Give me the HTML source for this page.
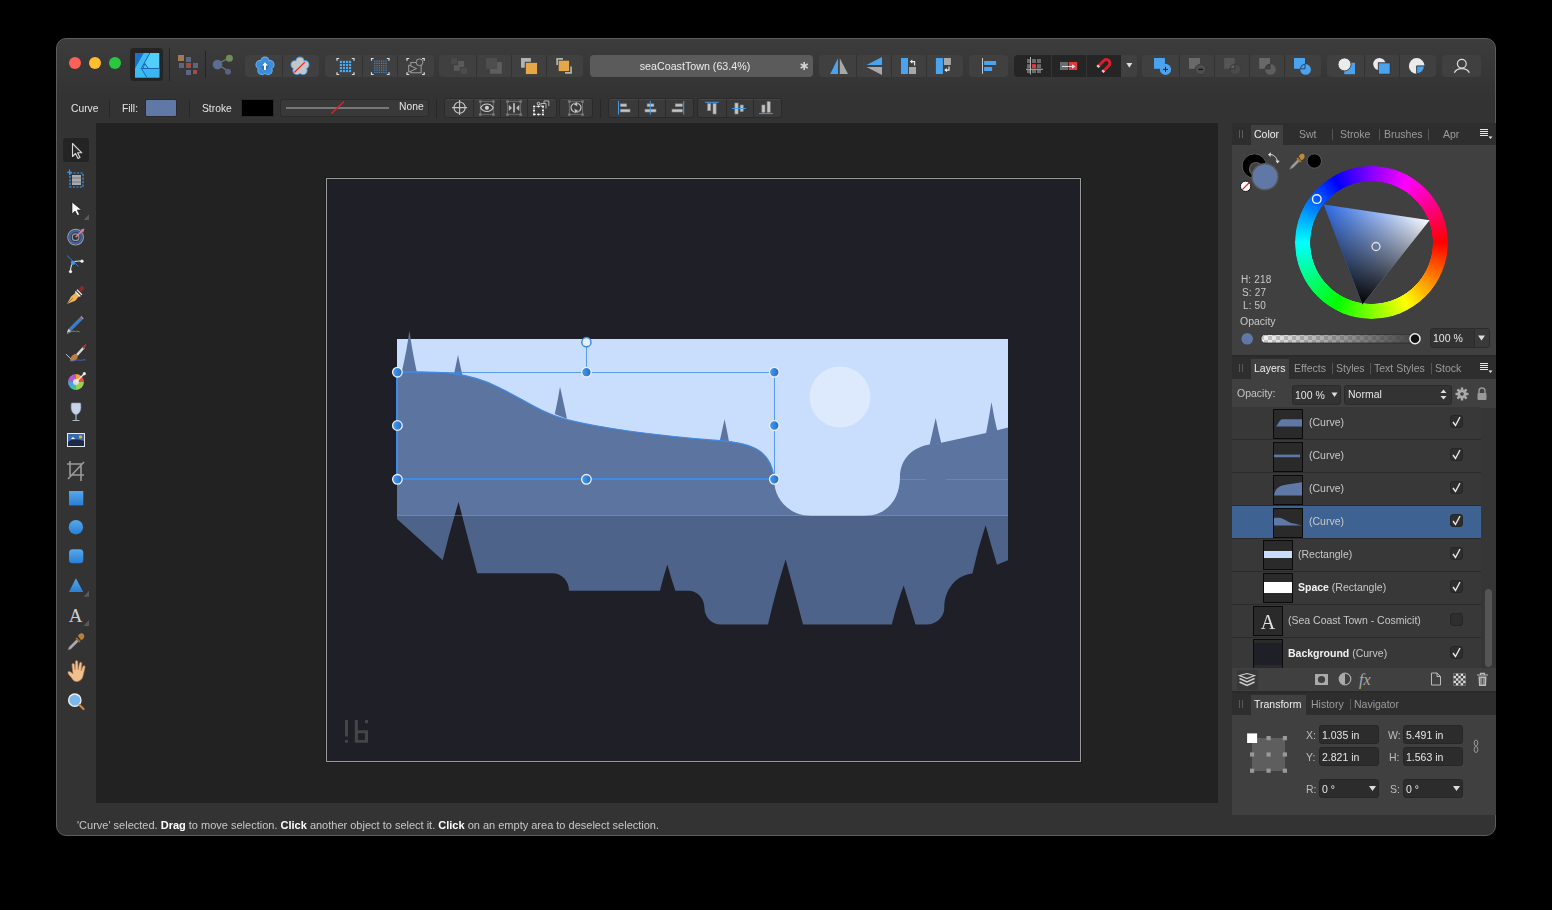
<!DOCTYPE html>
<html><head><meta charset="utf-8">
<style>
*{margin:0;padding:0;box-sizing:border-box}
html,body{width:1552px;height:910px;overflow:hidden;background:#000;font-family:"Liberation Sans",sans-serif;-webkit-font-smoothing:antialiased}
.abs{position:absolute}
#win{position:absolute;left:56px;top:38px;width:1440px;height:798px;border-radius:10px;background:linear-gradient(#3c3c3c 0px,#393939 20px,#353535 45px,#333 55px,#333 100%);border:1px solid #5c5c5c;overflow:hidden}
#canvas{position:absolute;left:96px;top:123px;width:1122px;height:680px;background:#222222}
#doc{position:absolute;left:326px;top:178px;width:755px;height:584px;border:1px solid #9a9a9a;background:#1e1f27;box-shadow:0 0 0 1px #1a1a1a}
.t{position:absolute;white-space:nowrap;color:#e0e0e0;font-size:11px;line-height:1}

.grp{position:absolute;top:55px;height:22px;background:#404040;border-radius:4px}
.dv{position:absolute;top:0;bottom:0;width:1px;background:#333}
.ic{position:absolute;overflow:visible}
.sep{position:absolute;width:1px;background:#252525}

.g2{position:absolute;top:98px;height:20px;background:#3a3a3a;border:1px solid #2a2a2a;border-radius:3px;box-shadow:inset 0 1px 0 #464646}
.d2{position:absolute;top:0;bottom:0;width:1px;background:#2c2c2c}

.tabstrip{position:absolute;left:1232px;width:264px;background:#2e2e2e}
.tab{position:absolute;font-size:10.5px;color:#9c9c9c;white-space:nowrap;line-height:1}
.tabsel{position:absolute;background:#404040}
.tsep{position:absolute;width:1px;height:11px;background:#555}
.row{position:absolute;left:1232px;width:249px;height:33px;border-bottom:1px solid #2a2a2a;background:#383838}
.thumb{position:absolute;width:30px;height:30px;background:#2a2a2a;border:1px solid #0a0a0a}
.lt{position:absolute;font-size:10.5px;color:#c8c8c8;white-space:nowrap;line-height:1}
.lt b{color:#f2f2f2}
.cb{position:absolute;left:1450px;width:13px;height:13px;border-radius:3px;background:#2e2e2e;border:1px solid #262626}
.fld{position:absolute;background:#2c2c2c;border-radius:3px;border:1px solid #262626}
.ft{position:absolute;font-size:10.5px;color:#e6e6e6;white-space:nowrap;line-height:1}
.lbl{position:absolute;font-size:10.5px;color:#bdbdbd;white-space:nowrap;line-height:1}
.t,.tab,.lt,.ft,.lbl{will-change:transform}
</style></head>
<body>
<div id="win"></div>
<div id="canvas"></div>
<div id="doc"></div>
<!-- ARTWORK -->
<svg class="abs" style="left:0;top:0" width="1552" height="910" viewBox="0 0 1552 910">
  <rect x="397" y="339" width="611" height="177" fill="#c9ddfd"/>
  <circle cx="840" cy="397" r="30.5" fill="#dde9fd"/>
  <path fill="#5c74a0" d="M397,372 C440,371 470,372 500,388 C525,400 540,412 565,419 C600,428 660,436 720,440.6 C745,442.5 772,447 774,479 C774,500 790,516 812,516 L397,516 Z"/>
  <path fill="#5c74a0" d="M401.5,373 Q407,350 409.4,330.6 Q412,350 417,373 Z M453.8,375 Q456,365 458,355 Q460,365 462.6,376 Z M554.8,414 Q558,400 560,386.8 Q563,400 567,419 Z M719.3,443 Q722,431 724.6,419.3 Q727,431 729.3,443 Z"/>
  <path fill="#5c74a0" d="M864,516 C886,516 900,500 900,477 C900,458 914,447 929.6,444.5 L941.2,442.7 L986,432.9 L997.3,430.2 L1008,427.4 L1008,516 Z"/>
  <path fill="#5c74a0" d="M929.6,445 Q933,430 935.7,418 Q938,430 941.2,443 Z M986,433.5 Q989,418 991.5,402 Q994,418 997.3,431 Z"/>
  <rect x="397" y="516" width="611" height="109" fill="#4d6389"/>
  <path fill="#1e1f27" d="M397,519 L442.7,560.3 Q450,530 458.6,502 Q467,535 477.2,573.3 L552,573.3 C562,573.3 569,581 569,590.7 L660,590.7 Q663,578 667.3,564.5 Q671,578 675.4,590.7 L688.3,590.7 C697,590.7 704.4,598 704.4,607.7 C704.4,617 712,624.5 720.6,624.5 L768,624.5 Q776,590 785.6,559.6 Q794,590 803,624.5 L891.8,624.5 Q897,603 903.7,585.4 Q909,603 915.5,624.5 L926.8,624.5 C936,624.5 944.3,617 944.3,608 C944.3,590 956,575 972.4,573.5 Q978,548 985.6,525.2 Q991,545 997,564.7 L1008,560.3 L1008,660 L397,660 Z"/>
  <line x1="397" y1="515.5" x2="1008" y2="515.5" stroke="#8ea0c4" stroke-opacity="0.42" stroke-width="1"/>
  <line x1="900" y1="479.5" x2="926" y2="479.5" stroke="#8ea0c4" stroke-opacity="0.38" stroke-width="1"/>
  <line x1="946" y1="479.5" x2="1008" y2="479.5" stroke="#8ea0c4" stroke-opacity="0.38" stroke-width="1"/>
  <!-- logo -->
  <g fill="#454545">
    <rect x="345" y="720" width="3" height="16.5"/><rect x="345" y="740" width="3" height="2.7"/>
    <path d="M354.8,720 h3.1 v10.2 h10.1 v12.5 h-13.2 Z M358,733.3 v6.6 h6.9 v-6.6 Z" fill-rule="evenodd"/>
    <rect x="365" y="720" width="3" height="3.2"/>
  </g>
  <!-- selection -->
  <g fill="none" stroke="#3f8be6">
    <path stroke-width="1.1" d="M397,372 C440,371 470,372 500,388 C525,400 540,412 565,419 C600,428 660,436 720,440.6 C745,442.5 772,447 774,479"/>
    <line x1="397" y1="372.5" x2="774" y2="372.5" stroke-width="1" stroke-opacity="0.8"/>
    <line x1="774.5" y1="372" x2="774.5" y2="479" stroke-width="1" stroke-opacity="0.8"/>
    <line x1="586.5" y1="342" x2="586.5" y2="372" stroke-width="1" stroke-opacity="0.8"/>
    <line x1="397" y1="479" x2="774" y2="479" stroke-width="2"/>
    <line x1="397" y1="372" x2="397" y2="479" stroke-width="2"/>
  </g>
  <defs><linearGradient id="hg" x1="0" x2="1" y1="0" y2="0"><stop offset="0" stop-color="#4a9cf0"/><stop offset="1" stop-color="#1f6cc8"/></linearGradient></defs>
  <g fill="url(#hg)" stroke="#f0f0f0" stroke-width="1.3">
    <circle cx="397.4" cy="372.2" r="4.8"/><circle cx="586.4" cy="372.2" r="4.8"/><circle cx="774.3" cy="372.2" r="4.8"/>
    <circle cx="397.4" cy="425.5" r="4.8"/><circle cx="774.3" cy="425.5" r="4.8"/>
    <circle cx="397.4" cy="479.3" r="4.8"/><circle cx="586.4" cy="479.3" r="4.8"/><circle cx="774.3" cy="479.3" r="4.8"/>
  </g>
  <circle cx="586.4" cy="342.2" r="4.6" fill="#e8f0fb" stroke="#3f8be6" stroke-width="1.5"/>
</svg>
<!-- TOOLBAR -->
<div class="abs" style="left:75px;top:63px;width:12px;height:12px;margin:-6px 0 0 -6px;border-radius:50%;background:#fe5f57"></div>
<div class="abs" style="left:95px;top:63px;width:12px;height:12px;margin:-6px 0 0 -6px;border-radius:50%;background:#febc2e"></div>
<div class="abs" style="left:115px;top:63px;width:12px;height:12px;margin:-6px 0 0 -6px;border-radius:50%;background:#28c840"></div>
<div class="abs" style="left:130px;top:48px;width:33px;height:33px;background:#242424;border-radius:4px"></div>
<svg class="ic" style="left:134.9px;top:52.7px" width="24.3" height="24.4" viewBox="0 0 24.3 24.4">
 <rect x="0" y="0" width="24.3" height="24.4" fill="#52cefa"/>
 <path d="M0,0 H9 L0,16 Z" fill="#1b70cc"/>
 <path d="M9,0 H14.8 L6.3,15.5 L11.8,24.4 H0 V16 Z" fill="#3dbcf4"/>
 <path d="M6.3,15.5 H24.3 V24.4 H11.8 Z" fill="#3ab6f2"/>
 <path d="M9.8,10.4 L8,15.5 H13.3 Z" fill="#48c4f6"/>
 <path d="M14.8,0 L6.3,15.5 L11.8,24.4 M6.3,15.5 H24.3 M9.8,10.4 L8,15.5 M9.8,10.4 L13.3,15.5" stroke="#1d62b4" stroke-width="1" fill="none"/>
</svg>
<div class="sep" style="left:169px;top:48px;height:33px"></div>
<svg class="ic" style="left:178px;top:55px" width="22" height="20" viewBox="0 0 22 20">
 <rect x="0" y="0" width="6" height="6" fill="#a27a55"/><rect x="8" y="2" width="5" height="5" fill="#5c6584"/>
 <rect x="1" y="8" width="5" height="5" fill="#5c6584"/><rect x="8" y="8" width="5" height="5" fill="#a04d48"/><rect x="15" y="8" width="5" height="5" fill="#5c6584"/>
 <rect x="8" y="15" width="5" height="5" fill="#5c6584"/><rect x="15" y="15" width="4" height="4" fill="#a04d48"/>
</svg>
<div class="sep" style="left:205px;top:51px;height:27px"></div>
<svg class="ic" style="left:210px;top:54px" width="24" height="22" viewBox="0 0 24 22">
 <path d="M7,10 L19,4 M7,10 L18,17" stroke="#777" stroke-width="1.3"/>
 <circle cx="7.5" cy="10.6" r="4.8" fill="#5a6e92"/><circle cx="19.4" cy="4.3" r="3.5" fill="#6e8d57"/><circle cx="18" cy="17.8" r="3" fill="#5a6088"/>
</svg>
<div class="grp" style="left:245px;width:74px"><div class="dv" style="left:37px"></div></div>
<svg class="ic" style="left:254px;top:56px" width="22" height="20" viewBox="0 0 22 20"><circle cx="11.00" cy="5.10" r="4.6" fill="#6db4f2"/><circle cx="15.95" cy="8.69" r="4.6" fill="#6db4f2"/><circle cx="14.06" cy="14.51" r="4.6" fill="#6db4f2"/><circle cx="7.94" cy="14.51" r="4.6" fill="#6db4f2"/><circle cx="6.05" cy="8.69" r="4.6" fill="#6db4f2"/><circle cx="11" cy="10.3" r="6.6" fill="#6db4f2"/><circle cx="11.00" cy="5.10" r="3.7" fill="#3d8ddb"/><circle cx="15.95" cy="8.69" r="3.7" fill="#3d8ddb"/><circle cx="14.06" cy="14.51" r="3.7" fill="#3d8ddb"/><circle cx="7.94" cy="14.51" r="3.7" fill="#3d8ddb"/><circle cx="6.05" cy="8.69" r="3.7" fill="#3d8ddb"/><circle cx="11" cy="10.3" r="5.8" fill="#3d8ddb"/><circle cx="11" cy="10.3" r="3.6" fill="#2f72c0"/><path d="M11,6.2 L8,9.6 L10,9.6 L10,14 L12,14 L12,9.6 L14,9.6 Z" fill="#fff"/></svg>
<svg class="ic" style="left:289px;top:56px" width="22" height="20" viewBox="0 0 22 20"><circle cx="11.00" cy="5.10" r="4.6" fill="#3d8fe0"/><circle cx="15.95" cy="8.69" r="4.6" fill="#3d8fe0"/><circle cx="14.06" cy="14.51" r="4.6" fill="#3d8fe0"/><circle cx="7.94" cy="14.51" r="4.6" fill="#3d8fe0"/><circle cx="6.05" cy="8.69" r="4.6" fill="#3d8fe0"/><circle cx="11" cy="10.3" r="6.6" fill="#3d8fe0"/><circle cx="11.00" cy="5.10" r="3.7" fill="#c6c6c6"/><circle cx="15.95" cy="8.69" r="3.7" fill="#c6c6c6"/><circle cx="14.06" cy="14.51" r="3.7" fill="#c6c6c6"/><circle cx="7.94" cy="14.51" r="3.7" fill="#c6c6c6"/><circle cx="6.05" cy="8.69" r="3.7" fill="#c6c6c6"/><circle cx="11" cy="10.3" r="5.8" fill="#c6c6c6"/><path d="M5.3,16.5 L15.9,6.1" stroke="#e8282a" stroke-width="1.3"/></svg>
<div class="grp" style="left:325px;width:109px"><div class="dv" style="left:37px"></div><div class="dv" style="left:72px"></div></div>
<div class="grp" style="left:439px;width:144px"><div class="dv" style="left:37px"></div><div class="dv" style="left:72px"></div><div class="dv" style="left:107px"></div></div>
<div class="abs" style="left:590px;top:55px;width:223px;height:22px;background:#5b5b5b;border-radius:4px"></div>
<div class="t" style="left:590px;top:60.5px;width:210px;text-align:center;font-size:10.7px;color:#ececec">seaCoastTown (63.4%)</div>
<svg class="ic" style="left:798px;top:60px" width="12" height="12" viewBox="0 0 12 12"><path d="M6.2,2 V10 M2.7,4 L9.7,8 M2.7,8 L9.7,4" stroke="#d4d4d4" stroke-width="1.6"/></svg>
<svg class="ic" style="left:0;top:0" width="600" height="90" viewBox="0 0 600 90"><path d="M337,60.7 V58.5 H339.2 M351.8,58.5 H354 V60.7 M354,72.3 V74.5 H351.8 M339.2,74.5 H337 V72.3" stroke="#e0e0e0" stroke-width="1.2" fill="none"/><rect x="339.80" y="60.80" width="2.2" height="2.2" fill="#4aaaf4"/><rect x="339.80" y="63.85" width="2.2" height="2.2" fill="#4aaaf4"/><rect x="339.80" y="66.90" width="2.2" height="2.2" fill="#4aaaf4"/><rect x="339.80" y="69.95" width="2.2" height="2.2" fill="#4aaaf4"/><rect x="342.85" y="60.80" width="2.2" height="2.2" fill="#4aaaf4"/><rect x="342.85" y="63.85" width="2.2" height="2.2" fill="#4aaaf4"/><rect x="342.85" y="66.90" width="2.2" height="2.2" fill="#4aaaf4"/><rect x="342.85" y="69.95" width="2.2" height="2.2" fill="#4aaaf4"/><rect x="345.90" y="60.80" width="2.2" height="2.2" fill="#4aaaf4"/><rect x="345.90" y="63.85" width="2.2" height="2.2" fill="#4aaaf4"/><rect x="345.90" y="66.90" width="2.2" height="2.2" fill="#4aaaf4"/><rect x="345.90" y="69.95" width="2.2" height="2.2" fill="#4aaaf4"/><rect x="348.95" y="60.80" width="2.2" height="2.2" fill="#4aaaf4"/><rect x="348.95" y="63.85" width="2.2" height="2.2" fill="#4aaaf4"/><rect x="348.95" y="66.90" width="2.2" height="2.2" fill="#4aaaf4"/><rect x="348.95" y="69.95" width="2.2" height="2.2" fill="#4aaaf4"/><path d="M371.5,60.7 V58.5 H373.7 M386.8,58.5 H389 V60.7 M389,72.3 V74.5 H386.8 M373.7,74.5 H371.5 V72.3" stroke="#e0e0e0" stroke-width="1.2" fill="none"/><rect x="374.20" y="60.50" width="1.2" height="1.2" fill="#3f8ad8"/><rect x="374.20" y="62.75" width="1.2" height="1.2" fill="#3f8ad8"/><rect x="374.20" y="65.00" width="1.2" height="1.2" fill="#3f8ad8"/><rect x="374.20" y="67.25" width="1.2" height="1.2" fill="#3f8ad8"/><rect x="374.20" y="69.50" width="1.2" height="1.2" fill="#3f8ad8"/><rect x="374.20" y="71.75" width="1.2" height="1.2" fill="#3f8ad8"/><rect x="376.45" y="60.50" width="1.2" height="1.2" fill="#3f8ad8"/><rect x="376.45" y="62.75" width="1.2" height="1.2" fill="#3f8ad8"/><rect x="376.45" y="65.00" width="1.2" height="1.2" fill="#3f8ad8"/><rect x="376.45" y="67.25" width="1.2" height="1.2" fill="#3f8ad8"/><rect x="376.45" y="69.50" width="1.2" height="1.2" fill="#3f8ad8"/><rect x="376.45" y="71.75" width="1.2" height="1.2" fill="#3f8ad8"/><rect x="378.70" y="60.50" width="1.2" height="1.2" fill="#3f8ad8"/><rect x="378.70" y="62.75" width="1.2" height="1.2" fill="#3f8ad8"/><rect x="378.70" y="65.00" width="1.2" height="1.2" fill="#3f8ad8"/><rect x="378.70" y="67.25" width="1.2" height="1.2" fill="#3f8ad8"/><rect x="378.70" y="69.50" width="1.2" height="1.2" fill="#3f8ad8"/><rect x="378.70" y="71.75" width="1.2" height="1.2" fill="#3f8ad8"/><rect x="380.95" y="60.50" width="1.2" height="1.2" fill="#3f8ad8"/><rect x="380.95" y="62.75" width="1.2" height="1.2" fill="#3f8ad8"/><rect x="380.95" y="65.00" width="1.2" height="1.2" fill="#3f8ad8"/><rect x="380.95" y="67.25" width="1.2" height="1.2" fill="#3f8ad8"/><rect x="380.95" y="69.50" width="1.2" height="1.2" fill="#3f8ad8"/><rect x="380.95" y="71.75" width="1.2" height="1.2" fill="#3f8ad8"/><rect x="383.20" y="60.50" width="1.2" height="1.2" fill="#3f8ad8"/><rect x="383.20" y="62.75" width="1.2" height="1.2" fill="#3f8ad8"/><rect x="383.20" y="65.00" width="1.2" height="1.2" fill="#3f8ad8"/><rect x="383.20" y="67.25" width="1.2" height="1.2" fill="#3f8ad8"/><rect x="383.20" y="69.50" width="1.2" height="1.2" fill="#3f8ad8"/><rect x="383.20" y="71.75" width="1.2" height="1.2" fill="#3f8ad8"/><rect x="385.45" y="60.50" width="1.2" height="1.2" fill="#3f8ad8"/><rect x="385.45" y="62.75" width="1.2" height="1.2" fill="#3f8ad8"/><rect x="385.45" y="65.00" width="1.2" height="1.2" fill="#3f8ad8"/><rect x="385.45" y="67.25" width="1.2" height="1.2" fill="#3f8ad8"/><rect x="385.45" y="69.50" width="1.2" height="1.2" fill="#3f8ad8"/><rect x="385.45" y="71.75" width="1.2" height="1.2" fill="#3f8ad8"/><path d="M407,60.7 V58.5 H409.2 M422.0,58.5 H424.2 V60.7 M424.2,72.3 V74.5 H422.0 M409.2,74.5 H407 V72.3" stroke="#e0e0e0" stroke-width="1.2" fill="none"/><rect x="410.8" y="62.6" width="10.3" height="10.2" fill="none" stroke="#a8a8a8" stroke-width="0.9"/><circle cx="419.5" cy="62.3" r="3.4" fill="#404040" stroke="#a8a8a8" stroke-width="0.9"/><path d="M408.7,65 L416.5,68.6 L408.7,72.2 Z" fill="#404040" stroke="#a8a8a8" stroke-width="0.9"/><rect x="451.1" y="58.2" width="6" height="5.6" fill="#4a4a4a"/><rect x="458.1" y="61" width="6" height="6" fill="#5a5a5a"/><rect x="453.9" y="65.2" width="6" height="5.6" fill="#5a5a5a"/><rect x="461" y="68" width="6" height="6" fill="#4c4c4c"/><rect x="486.1" y="58.1" width="11" height="10.8" fill="#4e4e4e"/><path d="M490,73.7 H501.8 V62 H497.1 V68.9 H490 Z" fill="#5e5e5e"/><rect x="521" y="58" width="9.9" height="9.7" fill="#b3b3b3"/><rect x="525.3" y="62.3" width="12.3" height="12.3" fill="#e6a847" stroke="#404040" stroke-width="1"/><path d="M556.3,65 V58.1 H563 V59.8 H558 V65 Z" fill="#b3b3b3"/><path d="M571.9,66.5 V73.7 H565 V72 H570.2 V66.5 Z" fill="#b3b3b3"/><rect x="558.7" y="60.7" width="10.4" height="10.4" fill="#e6a847"/></svg>
<div class="grp" style="left:819px;width:144px"><div class="dv" style="left:37px"></div><div class="dv" style="left:72px"></div><div class="dv" style="left:107px"></div></div>
<svg class="ic" style="left:828px;top:56px" width="22" height="20" viewBox="0 0 22 20">
 <path d="M10,2.2 L10,18 L2.2,18 Z" fill="#4aa3ef"/><path d="M11.8,2.2 L20,18 L11.8,18 Z" fill="#a8a8a8"/>
</svg>
<div class="grp" style="left:969px;width:39px"></div>
<svg class="ic" style="left:0;top:0" width="1010" height="90" viewBox="0 0 1010 90">
 <path d="M882,57 V65 H866.5 Z" fill="#4aa3ef"/><path d="M866.5,67 H882 V75 Z" fill="#a8a8a8"/>
 <rect x="901" y="58" width="7" height="16" fill="#4aa3ef"/><rect x="909" y="67" width="7" height="7" fill="#a8a8a8"/>
 <path d="M914.6,65.5 V61.6 H911.5" fill="none" stroke="#eee" stroke-width="1.1"/><path d="M909.8,61.6 L912.3,59.4 V63.8 Z" fill="#eee"/>
 <rect x="935.9" y="58" width="7" height="16" fill="#4aa3ef"/><rect x="943.9" y="58" width="7" height="7" fill="#a8a8a8"/>
 <path d="M949,66.5 V70.1 H946" fill="none" stroke="#eee" stroke-width="1.1"/><path d="M944.3,70.1 L946.8,67.9 V72.3 Z" fill="#eee"/>
 <rect x="982" y="58" width="1" height="15.8" fill="#c8c8c8"/><rect x="984.1" y="61" width="12" height="4" fill="#4aa3ef"/><rect x="984.1" y="67" width="8" height="4" fill="#4aa3ef"/>
</svg>
<div class="grp" style="left:1014px;width:123px"></div>
<div class="abs" style="left:1014px;top:55px;width:107px;height:22px;background:#252525;border-radius:4px 0 0 4px"></div>
<div class="abs" style="left:1051px;top:55px;width:1px;height:22px;background:#333"></div>
<div class="abs" style="left:1086px;top:55px;width:1px;height:22px;background:#333"></div>
<svg class="ic" style="left:1023px;top:56px" width="22" height="20" viewBox="0 0 22 20">
 <g fill="#6c6c6c"><rect x="4" y="3" width="4" height="4"/><rect x="9" y="3" width="4" height="4"/><rect x="14" y="3" width="4" height="4"/>
 <rect x="4" y="8.2" width="4" height="4"/><rect x="14" y="8.2" width="4" height="4"/>
 <rect x="4" y="13.5" width="4" height="3.6"/><rect x="9" y="13.5" width="4" height="3.6"/><rect x="14" y="13.5" width="4" height="3.6"/></g>
 <rect x="9" y="8.2" width="4" height="4" fill="#e8383a"/>
 <path d="M7.5,1 V18.5 M3,13.3 H20" stroke="#bdbdbd" stroke-width="0.9"/>
</svg>
<svg class="ic" style="left:1059px;top:56px" width="20" height="20" viewBox="0 0 20 20">
 <rect x="1" y="6" width="8" height="8" fill="#6c6c6c"/><rect x="9.9" y="6" width="8.3" height="8" fill="#e8383a"/>
 <path d="M3,10.5 H14" stroke="#ddd" stroke-width="1"/><path d="M16.5,10.5 L13,8.3 V12.7 Z" fill="#ddd"/>
</svg>
<svg class="ic" style="left:1093px;top:56px" width="20" height="20" viewBox="0 0 20 20">
 <path d="M4.5,11 L11,4.5 A3.54,3.54 0 0 1 16,9.5 L9.5,16" stroke="#d8202c" stroke-width="3" fill="none"/>
 <path d="M4.5,11 L6,9.5 M9.5,16 L11,14.5" stroke="#d0d0d0" stroke-width="3"/>
</svg>
<svg class="ic" style="left:1124px;top:60px" width="10" height="10" viewBox="0 0 10 10"><path d="M2.4,3 H8.3 L5.3,7.8 Z" fill="#ddd"/></svg>
<div class="grp" style="left:1142px;width:179px"><div class="dv" style="left:37px"></div><div class="dv" style="left:72px"></div><div class="dv" style="left:107px"></div><div class="dv" style="left:142px"></div></div>
<svg class="ic" style="left:1151px;top:56px" width="22" height="22" viewBox="0 0 22 22">
 <rect x="3" y="2" width="10.9" height="10.8" fill="#4aa3ef"/><circle cx="14.5" cy="13.4" r="5.6" fill="#4aa3ef"/>
 <path d="M12,13.4 H17 M14.5,10.9 V15.9" stroke="#1a1a1a" stroke-width="1"/>
</svg>
<svg class="ic" style="left:1187px;top:56px" width="22" height="22" viewBox="0 0 22 22">
 <rect x="2" y="2" width="11" height="10.8" fill="#6a6a6a"/><circle cx="13.6" cy="13.4" r="5.3" fill="#4e4e4e" stroke="#3a3a3a" stroke-width="1"/>
 <path d="M11.4,13.4 H15.8" stroke="#111" stroke-width="1.3"/>
</svg>
<svg class="ic" style="left:1222px;top:56px" width="22" height="22" viewBox="0 0 22 22">
 <rect x="2.1" y="2" width="10.7" height="10.8" fill="#555"/><circle cx="13.4" cy="13.4" r="5.3" fill="#4a4a4a" stroke="#3c3c3c" stroke-width="0.9"/>
 <path d="M8.1,12.8 H12.8 V8.1 A5.3,5.3 0 0 0 8.1,12.8 Z" fill="#606060" stroke="#333" stroke-width="0.9"/>
</svg>
<svg class="ic" style="left:1257px;top:56px" width="22" height="22" viewBox="0 0 22 22">
 <rect x="2.2" y="2" width="10.8" height="10.8" fill="#686868"/><circle cx="13.5" cy="13.4" r="5.3" fill="#5e5e5e"/>
 <path d="M8.2,12.8 H13 V8.1 A5.3,5.3 0 0 0 8.2,12.8 Z" fill="#444" stroke="#333" stroke-width="0.9"/>
</svg>
<svg class="ic" style="left:1292px;top:56px" width="22" height="22" viewBox="0 0 22 22">
 <rect x="2" y="2" width="11" height="10.8" fill="#4aa3ef"/><circle cx="13.6" cy="13.4" r="5.3" fill="#4aa3ef"/>
 <path d="M8.3,12.8 H13 V8.1 A5.3,5.3 0 0 0 8.3,12.8 Z" fill="none" stroke="#1e3e60" stroke-width="0.9"/>
</svg>
<div class="grp" style="left:1327px;width:109px"><div class="dv" style="left:37px"></div><div class="dv" style="left:72px"></div></div>
<svg class="ic" style="left:1336px;top:56px" width="20" height="20" viewBox="0 0 20 20">
 <rect x="8.2" y="6.8" width="10.8" height="11.4" fill="#4aa3ef"/><circle cx="8.5" cy="8.4" r="6.5" fill="#ebebeb" stroke="#404040" stroke-width="0.9"/>
</svg>
<svg class="ic" style="left:1372px;top:56px" width="20" height="20" viewBox="0 0 20 20">
 <circle cx="7.4" cy="8.1" r="6.2" fill="#ebebeb"/><rect x="6.3" y="6.8" width="11.9" height="11.4" fill="#4aa3ef" stroke="#2e2e2e" stroke-width="0.9"/>
</svg>
<svg class="ic" style="left:1407px;top:56px" width="20" height="20" viewBox="0 0 20 20">
 <circle cx="9.7" cy="9.9" r="7.8" fill="#ebebeb"/><path d="M9.7,9.9 H17.5 A7.8,7.8 0 0 1 9.7,17.7 Z" fill="#4aa3ef" stroke="#2a2a2a" stroke-width="0.9"/>
</svg>
<div class="grp" style="left:1442px;width:39px"></div>
<svg class="ic" style="left:1451px;top:56px" width="22" height="20" viewBox="0 0 22 20">
 <circle cx="10.8" cy="7.7" r="4.4" fill="none" stroke="#ddd" stroke-width="1.2"/><path d="M3.4,16.8 C5.5,11.2 16.1,11.2 18.3,16.8" fill="none" stroke="#ddd" stroke-width="1.2"/>
</svg>

<!-- CONTEXT -->
<div class="t" style="left:71px;top:103.5px;font-size:10.3px;color:#e4e4e4">Curve</div>
<div class="sep" style="left:109px;top:99px;height:19px;background:#282828"></div>
<div class="t" style="left:122px;top:103.5px;font-size:10.3px;color:#e4e4e4">Fill:</div>
<div class="abs" style="left:145px;top:99px;width:32px;height:18px;background:#5f78a5;border:1px solid #2a2a2a;border-radius:2px"></div>
<div class="sep" style="left:189px;top:99px;height:19px;background:#282828"></div>
<div class="t" style="left:202px;top:103.5px;font-size:10.3px;color:#e4e4e4">Stroke</div>
<div class="abs" style="left:241px;top:99px;width:33px;height:18px;background:#000;border:1px solid #2a2a2a"></div>
<div class="abs" style="left:280px;top:99px;width:149px;height:18px;background:#393939;border:1px solid #2b2b2b;border-radius:3px"></div>
<div class="abs" style="left:286px;top:107px;width:103px;height:2px;background:#777"></div>
<svg class="ic" style="left:330px;top:100px" width="16" height="16" viewBox="0 0 16 16"><path d="M1.5,13.5 L14,1.5" stroke="#d4242c" stroke-width="1.5"/></svg>
<div class="t" style="left:398.5px;top:101.5px;font-size:10.3px;color:#e4e4e4">None</div>
<div class="sep" style="left:436px;top:99px;height:19px;background:#282828"></div>
<div class="g2" style="left:444px;width:113px"><div class="d2" style="left:28px"></div><div class="d2" style="left:55px"></div><div class="d2" style="left:82px"></div></div>
<div class="g2" style="left:559px;width:34px"></div>
<svg class="ic" style="left:0;top:0" width="600" height="125" viewBox="0 0 600 125"><circle cx="459.6" cy="107.6" r="5.6" fill="none" stroke="#c8c8c8" stroke-width="1.1"/><path d="M459.6,100.1 V115.1 M452.1,107.6 H467.1" stroke="#c8c8c8" stroke-width="1.1"/><rect x="480.4" y="101.4" width="13.0" height="13.0" fill="none" stroke="#6a6a6a" stroke-width="1"/><g fill="#777"><circle cx="480.4" cy="101.4" r="1.5"/><circle cx="493.4" cy="101.4" r="1.5"/><circle cx="480.4" cy="114.4" r="1.5"/><circle cx="493.4" cy="114.4" r="1.5"/></g><path d="M480.6,107.8 C483.5,102.8 490.3,102.8 493.2,107.8 C490.3,112.8 483.5,112.8 480.6,107.8 Z" fill="#3a3a3a" stroke="#cfcfcf" stroke-width="1.1"/><circle cx="486.9" cy="107.8" r="2.1" fill="#cfcfcf"/><rect x="507.5" y="101.4" width="13.100000000000023" height="13.0" fill="none" stroke="#6a6a6a" stroke-width="1"/><g fill="#777"><circle cx="507.5" cy="101.4" r="1.5"/><circle cx="520.6" cy="101.4" r="1.5"/><circle cx="507.5" cy="114.4" r="1.5"/><circle cx="520.6" cy="114.4" r="1.5"/></g><rect x="513" y="103.2" width="2" height="9.3" fill="#aaa"/><path d="M508.8,104.8 L512,107.9 L508.8,111 Z M519.3,104.8 L516.1,107.9 L519.3,111 Z" fill="#bbb"/><path d="M544,104 V101 H548.8 V106" fill="none" stroke="#bdbdbd" stroke-width="0.9"/><path d="M541,106 V103.5 H546 V108.5" fill="none" stroke="#bdbdbd" stroke-width="0.9"/><rect x="534" y="106.4" width="9" height="8" fill="none" stroke="#eee" stroke-width="0.9" stroke-dasharray="1.4 1"/><g fill="#fff"><circle cx="534" cy="106.4" r="1"/><circle cx="534" cy="110.4" r="1"/><circle cx="534" cy="114.4" r="1"/><circle cx="538.5" cy="106.4" r="1"/><circle cx="538.5" cy="114.4" r="1"/><circle cx="543" cy="106.4" r="1"/><circle cx="543" cy="110.4" r="1"/><circle cx="543" cy="114.4" r="1"/></g><circle cx="538.5" cy="103.6" r="1.3" fill="none" stroke="#eee" stroke-width="0.8"/><rect x="569.4" y="101.4" width="13.100000000000023" height="13.0" fill="none" stroke="#6a6a6a" stroke-width="1"/><g fill="#777"><circle cx="569.4" cy="101.4" r="1.5"/><circle cx="582.5" cy="101.4" r="1.5"/><circle cx="569.4" cy="114.4" r="1.5"/><circle cx="582.5" cy="114.4" r="1.5"/></g><ellipse cx="576" cy="107.6" rx="5" ry="4.6" fill="none" stroke="#c4c4c4" stroke-width="1.2"/><path d="M573.2,104.3 L577.6,101.6 L577.4,106.6 Z M578.8,111 L574.5,108.6 L574.6,113.6 Z" fill="#c8c8c8" stroke="#3a3a3a" stroke-width="0.4"/></svg>
<div class="sep" style="left:600px;top:99px;height:19px;background:#282828"></div>
<div class="g2" style="left:608px;width:86px"><div class="d2" style="left:29px"></div><div class="d2" style="left:56px"></div></div>
<div class="g2" style="left:697px;width:85px"><div class="d2" style="left:28px"></div><div class="d2" style="left:55px"></div></div>
<svg class="ic" style="left:0;top:0" width="800" height="125" viewBox="0 0 800 125"><rect x="620.4" y="103.9" width="6.30" height="2.70" fill="#c4c4c4" stroke="#8a8a8a" stroke-width="0.6"/><rect x="620.4" y="109.2" width="9.60" height="2.80" fill="#c4c4c4" stroke="#8a8a8a" stroke-width="0.6"/><rect x="618" y="100.9" width="1" height="13.7" fill="#3f9cec"/><rect x="647.1" y="103.9" width="6.80" height="2.70" fill="#c4c4c4" stroke="#8a8a8a" stroke-width="0.6"/><rect x="645" y="109.2" width="11.00" height="2.80" fill="#c4c4c4" stroke="#8a8a8a" stroke-width="0.6"/><rect x="649.8" y="100.9" width="1" height="13.7" fill="#3f9cec"/><rect x="675.3" y="103.9" width="7.00" height="2.70" fill="#c4c4c4" stroke="#8a8a8a" stroke-width="0.6"/><rect x="672" y="109.2" width="10.30" height="2.80" fill="#c4c4c4" stroke="#8a8a8a" stroke-width="0.6"/><rect x="683.2" y="100.9" width="1" height="13.7" fill="#3f9cec"/><rect x="707.7" y="103.6" width="3.10" height="7.10" fill="#c4c4c4" stroke="#8a8a8a" stroke-width="0.6"/><rect x="713" y="103.6" width="3.10" height="10.40" fill="#c4c4c4" stroke="#8a8a8a" stroke-width="0.6"/><rect x="705" y="101.8" width="13.8" height="1" fill="#3f9cec"/><rect x="734.9" y="103" width="3.20" height="11.00" fill="#c4c4c4" stroke="#8a8a8a" stroke-width="0.6"/><rect x="740.2" y="105" width="3.00" height="6.50" fill="#c4c4c4" stroke="#8a8a8a" stroke-width="0.6"/><rect x="732" y="108" width="13.7" height="1" fill="#3f9cec"/><rect x="761.9" y="105" width="3.10" height="7.30" fill="#c4c4c4" stroke="#8a8a8a" stroke-width="0.6"/><rect x="767.1" y="101.7" width="3.10" height="10.60" fill="#c4c4c4" stroke="#8a8a8a" stroke-width="0.6"/><rect x="758.9" y="113.1" width="14" height="1" fill="#3f9cec"/></svg>
<!-- LEFT TOOLS -->
<div class="abs" style="left:63px;top:138px;width:26px;height:24px;background:#242424;border-radius:3px"></div>
<svg class="ic" style="left:58px;top:130px" width="38" height="600" viewBox="0 0 38 600">
 <defs>
  <linearGradient id="bl" x1="0" y1="0" x2="0" y2="1"><stop offset="0" stop-color="#55a9ec"/><stop offset="1" stop-color="#2a7ed4"/></linearGradient>
  <radialGradient id="wh" cx="0.5" cy="0.5" r="0.5"><stop offset="0" stop-color="#ff4040"/><stop offset="1" stop-color="#40a0ff"/></radialGradient>
 </defs>
 <!-- move tool y=150 -->
 <path d="M14.5,13.5 L14.5,26.5 L17.5,23.5 L20,28.5 L22,27.5 L19.6,22.8 L23.8,22.8 Z" fill="#2a2a2a" stroke="#d8d8d8" stroke-width="1.1" stroke-linejoin="round"/>
 <!-- artboard y=179 -->
 <rect x="12" y="43" width="13" height="14" fill="none" stroke="#3b9cf0" stroke-width="1.2" stroke-dasharray="2.2 1.3"/>
 <rect x="14" y="45" width="9" height="10" fill="#aaa"/><path d="M14,48 H23 M14,52 H23" stroke="#777" stroke-width="1"/>
 <path d="M11.5,39.5 V45 M9,42.2 H14" stroke="#3b9cf0" stroke-width="1.1"/>
 <!-- node y=208 -->
 <path d="M14,72 L14,84 L17,81 L19.5,85.5 L21.5,84.5 L19.2,80 L23.5,80 Z" fill="#fff" stroke="#111" stroke-width="0.6"/>
 <path d="M31,84.5 L31,90 L25.5,90 Z" fill="#5a5a5a"/>
 <!-- point transform y=237 -->
 <circle cx="17.6" cy="107.2" r="7.8" fill="none" stroke="#9a9a9a" stroke-width="1.2"/>
 <circle cx="17.6" cy="107.2" r="6" fill="none" stroke="#3d63a8" stroke-width="2.2"/>
 <circle cx="17.6" cy="107.2" r="3.3" fill="none" stroke="#9a9a9a" stroke-width="1.2"/>
 <path d="M17.6,107.2 L25,100" stroke="#e87a9a" stroke-width="1.4"/><path d="M26.5,98.5 L22.5,99.8 L25.2,102.5 Z" fill="#e87a9a"/>
 <!-- corner tool y=264 -->
 <path d="M9,125.5 L20.5,136.5" stroke="#3b7fd0" stroke-width="1"/>
 <path d="M14.9,132.8 C16.5,130.5 20,131 24,131.2 M14.9,132.8 C13,135 12.5,139 12.5,141.6" fill="none" stroke="#ddd" stroke-width="1.1"/>
 <rect x="13.1" y="131" width="3.6" height="3.6" fill="#3b9cf0"/>
 <circle cx="24" cy="131.2" r="1.6" fill="#eee"/><circle cx="12.5" cy="141.6" r="1.6" fill="#eee"/>
 <!-- pen y=294 -->
 <g transform="translate(0.48,29.6) scale(0.84)">
 <path d="M10,172 L15,163 L21,158 L25,162 L20,168 Z" fill="#f2b35a"/><path d="M10,172 L17,165" stroke="#6a4a20" stroke-width="0.8"/>
 <path d="M20,157 L26,163 M22,155 L28,161" stroke="#eee" stroke-width="1.5"/>
 <path d="M24,154 L28,150 L31,153 L27,158 Z" fill="#8a2a2a"/>
 </g>
 <!-- pencil y=324 -->
 <g transform="translate(0.88,40.4) scale(0.8)">
 <path d="M10,203 L12,198 L27,183 L30,186 L15,201 Z" fill="#3a7ccc"/><path d="M27,183 L30,186 L31,185 L28,182 Z" fill="#f09090"/>
 <path d="M10,203 L12,198 L15,201 Z" fill="#eecb9a"/>
 <path d="M10,204 C13,204 15,200 19,201 C21,202 23,200 26,202" fill="none" stroke="#999" stroke-width="0.9"/>
 </g>
 <!-- brush y=352 -->
 <g transform="translate(0.39,38.8) scale(0.85)">
 <path d="M9,218 L15,224" stroke="#ddd" stroke-width="1"/>
 <path d="M14,226 C14,221 17,218 21,218 L23,220 C23,224 19,227 14,226 Z" fill="#c47a3a"/>
 <path d="M21,218 L29,209 L31,211 L23,220 Z" fill="#d8d8d8"/><path d="M28,210 L32,206 L33,207 L30,212 Z" fill="#d82a2a"/>
 <path d="M14,226 C18,227 20,224 24,225 C27,226 29,224 32,225" fill="none" stroke="#3a6fd0" stroke-width="1.1"/>
 </g>
 <!-- color wheel y=382 -->
 <circle cx="18" cy="252" r="7.8" fill="#888"/>
 <path d="M18,252 L18,244.2 A7.8,7.8 0 0 1 25.8,252 Z" fill="#e84a4a"/>
 <path d="M18,252 L25.8,252 A7.8,7.8 0 0 1 18,259.8 Z" fill="#9ad04a"/>
 <path d="M18,252 L18,259.8 A7.8,7.8 0 0 1 10.2,252 Z" fill="#4aa0e0"/>
 <path d="M18,252 L10.2,252 A7.8,7.8 0 0 1 18,244.2 Z" fill="#b05ad0"/>
 <path d="M18,244.2 A7.8,7.8 0 0 1 23.5,246.5 L18,252 Z" fill="#f0a030"/>
 <path d="M18,259.8 A7.8,7.8 0 0 1 12.5,257.5 L18,252 Z" fill="#40c0a0"/>
 <circle cx="18" cy="252" r="3" fill="#ddd"/>
 <path d="M18,252 L26,244" stroke="#eee" stroke-width="1.2"/><circle cx="26.3" cy="243.7" r="1.6" fill="#eee"/>
 <!-- glass y=410 -->
 <path d="M13.5,273 L22.5,273 C23.5,278 23,283 18,285 C13,283 12.5,278 13.5,273 Z" fill="#c8d4e8" stroke="#8a9ab8" stroke-width="0.6"/>
 <path d="M18,285 V290 M14.5,290.5 H21.5" stroke="#aab6cc" stroke-width="1.2"/>
 <!-- image y=440 -->
 <rect x="9" y="303" width="18" height="14" fill="#e8e8e8"/><rect x="10" y="304" width="16" height="12" fill="#3a6ab0"/>
 <path d="M10,312 C14,309 18,309 26,311 V316 H10 Z" fill="#1a2a4a"/><path d="M13,309 L15,307 L17,309 Z" fill="#fff"/><circle cx="22.5" cy="307" r="1.7" fill="#f0b020"/>
 <!-- crop y=469 -->
 <path d="M12,331 V345 H26 M12,334 H23 V348 M9,334 H12 M23,348 V351 M10,349 L26,332" fill="none" stroke="#9a9a9a" stroke-width="1.6"/>
 <!-- rect y=498 -->
 <rect x="11" y="361" width="14.3" height="14.4" fill="url(#bl)"/>
 <!-- ellipse y=527 -->
 <circle cx="17.9" cy="397.2" r="7.2" fill="url(#bl)"/>
 <!-- rounded rect y=556 -->
 <rect x="11" y="419.3" width="14.3" height="14" rx="3.5" fill="url(#bl)"/>
 <!-- triangle y=585 -->
 <path d="M17.9,448.3 L25.2,462 L10.9,462 Z" fill="url(#bl)"/>
 <path d="M31,460.8 L31,466.8 L25.6,466.8 Z" fill="#5a5a5a"/>
 <!-- A y=614 -->
 <text x="17.5" y="491.5" text-anchor="middle" font-family="Liberation Serif" font-size="19" fill="#cfcfcf">A</text>
 <path d="M31,490 L31,496 L25.6,496 Z" fill="#5a5a5a"/>
 <!-- eyedropper y=643 -->
 <path d="M10,520 L11,517 L19,509 L21,511 L13,519 Z" fill="#aaa" stroke="#666" stroke-width="0.5"/>
 <path d="M18,508 L22,512" stroke="#8a6a3a" stroke-width="2.2"/>
 <path d="M20,506 C21,503 25,502 26,505 C27,507 25,510 23,510 Z" fill="#b8823a"/>
 <!-- hand y=672 -->
 <path d="M13,547 C11,545 9,543 10.5,541.5 C12,541 14,543 15,544 L14,535 C14,533 16,533 16.5,535 L17,540 L17.5,532 C17.5,530 19.5,530 19.8,532 L20,540 L21.5,533.5 C22,531.5 24,532 23.8,534 L23,541 L25,536.5 C25.5,535 27.5,535.5 27,537.5 L25,546 C24,550 21,551.5 18.5,551.5 C16,551.5 14.5,549.5 13,547 Z" fill="#f0c090" stroke="#b88050" stroke-width="0.6"/>
 <!-- zoom y=700 -->
 <circle cx="16.8" cy="570.2" r="6.2" fill="#7ab8f0" stroke="#f0f0f0" stroke-width="1.3"/>
 <path d="M21.5,575 L25.5,579" stroke="#d08a40" stroke-width="2.2" stroke-linecap="round"/>
</svg>

<!-- RIGHT PANEL -->
<!-- color panel -->
<div class="tabstrip" style="top:123px;height:22px"></div>
<div class="abs" style="left:1239px;top:130px;width:1px;height:8px;background:#5a5a5a"></div>
<div class="abs" style="left:1242px;top:130px;width:1px;height:8px;background:#5a5a5a"></div>
<div class="tabsel" style="left:1251px;top:125px;width:32px;height:20px"></div>
<div class="tab" style="left:1254px;top:129px;color:#f0f0f0">Color</div>
<div class="tab" style="left:1299px;top:129px">Swt</div>
<div class="tsep" style="left:1332px;top:129px"></div>
<div class="tab" style="left:1340px;top:129px">Stroke</div>
<div class="tsep" style="left:1379px;top:129px"></div>
<div class="tab" style="left:1384px;top:129px">Brushes</div>
<div class="tsep" style="left:1428px;top:129px"></div>
<div class="tab" style="left:1443px;top:129px">Apr</div>
<svg class="ic" style="left:1479px;top:128px" width="16" height="12" viewBox="0 0 16 12"><path d="M1,1.5 H9 M1,3.5 H9 M1,5.5 H9 M1,7.5 H9" stroke="#e6e6e6" stroke-width="1"/><path d="M9.5,8.5 H13.5 L11.5,11 Z" fill="#e6e6e6"/></svg>
<div class="abs" style="left:1232px;top:145px;width:264px;height:210px;background:#404040"></div>
<div class="abs" style="left:1295px;top:166px;width:153px;height:153px;border-radius:50%;background:conic-gradient(from 0deg, #80f 0deg, #f0f 30deg, #f00 90deg, #ff0 150deg, #0f0 210deg, #0ff 270deg, #00f 330deg, #80f 360deg);-webkit-mask:radial-gradient(circle, transparent 61px, #000 61.5px);mask:radial-gradient(circle, transparent 61px, #000 61.5px)"></div>
<svg class="ic" style="left:1232px;top:145px" width="264" height="210" viewBox="1232 145 264 210">
 <defs>
  <linearGradient id="tri1" x1="1323.6" y1="204.4" x2="1429.6" y2="220.2" gradientUnits="userSpaceOnUse"><stop offset="0" stop-color="#2b6ae6"/><stop offset="1" stop-color="#ffffff"/></linearGradient>
  <linearGradient id="tri2" x1="1376" y1="212" x2="1362.4" y2="304.6" gradientUnits="userSpaceOnUse"><stop offset="0" stop-color="#000" stop-opacity="0"/><stop offset="1" stop-color="#000" stop-opacity="1"/></linearGradient>
  <pattern id="chk" width="8" height="8" patternUnits="userSpaceOnUse"><rect width="8" height="8" fill="#c8c8c8"/><rect width="4" height="4" fill="#f4f4f4"/><rect x="4" y="4" width="4" height="4" fill="#f4f4f4"/></pattern>
  <linearGradient id="fade" x1="0" x2="1"><stop offset="0" stop-color="#404040" stop-opacity="0"/><stop offset="1" stop-color="#404040" stop-opacity="1"/></linearGradient>
 </defs>
 <!-- stroke/fill wells -->
 <circle cx="1254.3" cy="166" r="12.2" fill="#000" stroke="#5a5a5a" stroke-width="1"/>
 <circle cx="1256" cy="169" r="6.5" fill="#404040" stroke="#5e5e5e" stroke-width="1.2"/>
 <circle cx="1265" cy="176.8" r="13" fill="#5f78a5" stroke="#5a5a5a" stroke-width="1.4"/>
 <circle cx="1245.6" cy="186.3" r="5.2" fill="#fff" stroke="#111" stroke-width="1"/>
 <path d="M1242.3,189.6 L1248.9,183" stroke="#e82020" stroke-width="1.2"/>
 <path d="M1269,154.5 C1273,154 1277,157 1277.5,162" fill="none" stroke="#ddd" stroke-width="1"/>
 <path d="M1268,154.5 L1271,152.3 L1270.5,157 Z M1277.5,163.5 L1275.5,160.5 L1279.8,160.8 Z" fill="#ddd"/>
 <!-- eyedropper -->
 <path d="M1289.5,169.5 L1291,166 L1298,159 L1300,161 L1293,168 Z" fill="#999" stroke="#555" stroke-width="0.5"/>
 <path d="M1297,158 L1301,162" stroke="#a8742a" stroke-width="2"/>
 <path d="M1299,156.5 C1300,153 1304,153 1304.5,155.5 C1305,158 1303,160 1301,160 Z" fill="#c08a3a"/>
 <circle cx="1314.3" cy="161" r="7.2" fill="#000" stroke="#5a5a5a" stroke-width="1"/>
 <!-- wheel -->
 
 <path d="M1323.6,204.4 L1429.6,220.2 L1362.4,304.6 Z" fill="url(#tri1)"/>
 <path d="M1323.6,204.4 L1429.6,220.2 L1362.4,304.6 Z" fill="url(#tri2)"/>
 <circle cx="1316.8" cy="199.1" r="4.3" fill="none" stroke="#f0f0f0" stroke-width="1.4"/>
 <circle cx="1376" cy="246.5" r="4" fill="none" stroke="#e0e0e0" stroke-width="1.3"/>
 <!-- opacity -->
 <circle cx="1247.2" cy="338.8" r="5.8" fill="#5f78a5"/>
 <rect x="1261" y="334.5" width="158" height="8.5" rx="4.25" fill="url(#chk)"/>
 <rect x="1261" y="334.5" width="158" height="8.5" rx="4.25" fill="url(#fade)"/>
 <rect x="1261" y="334.5" width="158" height="8.5" rx="4.25" fill="none" stroke="#2a2a2a" stroke-width="0.8"/>
 <circle cx="1415" cy="338.8" r="5" fill="#111" stroke="#f0f0f0" stroke-width="1.5"/>
</svg>
<div class="lbl" style="left:1240.8px;top:275px;font-size:10px;letter-spacing:0.15px;color:#c8c8c8">H: 218</div>
<div class="lbl" style="left:1241.8px;top:288px;font-size:10px;letter-spacing:0.15px;color:#c8c8c8">S: 27</div>
<div class="lbl" style="left:1242.8px;top:301px;font-size:10px;letter-spacing:0.15px;color:#c8c8c8">L: 50</div>
<div class="lbl" style="left:1240px;top:316px;font-size:10.5px;color:#c8c8c8">Opacity</div>
<div class="fld" style="left:1430px;top:328px;width:60px;height:20px;background:#333;border-color:#2c2c2c;overflow:hidden"><div class="abs" style="left:43px;top:0;width:17px;height:18px;background:#3a3a3a;border-left:1px solid #2c2c2c"></div></div>
<div class="ft" style="left:1433px;top:333px">100 %</div>
<svg class="ic" style="left:1477px;top:334px" width="10" height="8" viewBox="0 0 10 8"><path d="M1,1.5 H8 L4.5,6.5 Z" fill="#ddd"/></svg>
<div class="abs" style="left:1232px;top:355px;width:264px;height:2px;background:#2a2a2a"></div>
<!-- layers panel -->
<div class="tabstrip" style="top:357px;height:22px"></div>
<div class="abs" style="left:1239px;top:364px;width:1px;height:8px;background:#5a5a5a"></div>
<div class="abs" style="left:1242px;top:364px;width:1px;height:8px;background:#5a5a5a"></div>
<div class="tabsel" style="left:1251px;top:359px;width:38px;height:20px"></div>
<div class="tab" style="left:1254px;top:363px;color:#f0f0f0">Layers</div>
<div class="tab" style="left:1294px;top:363px">Effects</div>
<div class="tsep" style="left:1332px;top:363px"></div>
<div class="tab" style="left:1336px;top:363px">Styles</div>
<div class="tsep" style="left:1370px;top:363px"></div>
<div class="tab" style="left:1374px;top:363px">Text Styles</div>
<div class="tsep" style="left:1431px;top:363px"></div>
<div class="tab" style="left:1435px;top:363px">Stock</div>
<svg class="ic" style="left:1479px;top:362px" width="16" height="12" viewBox="0 0 16 12"><path d="M1,1.5 H9 M1,3.5 H9 M1,5.5 H9 M1,7.5 H9" stroke="#e6e6e6" stroke-width="1"/><path d="M9.5,8.5 H13.5 L11.5,11 Z" fill="#e6e6e6"/></svg>
<div class="abs" style="left:1232px;top:379px;width:264px;height:29px;background:#404040"></div>
<div class="lbl" style="left:1237px;top:388px;color:#c4c4c4">Opacity:</div>
<div class="fld" style="left:1292px;top:385px;width:49px;height:20px;background:#333;border-color:#2a2a2a"></div>
<div class="ft" style="left:1295px;top:390px">100 %</div>
<svg class="ic" style="left:1330px;top:391px" width="10" height="8" viewBox="0 0 10 8"><path d="M1.5,1.5 H7.5 L4.5,6 Z" fill="#ddd"/></svg>
<div class="fld" style="left:1344px;top:385px;width:108px;height:20px;background:#333;border-color:#2a2a2a"></div>
<div class="ft" style="left:1348px;top:389px">Normal</div>
<svg class="ic" style="left:1439px;top:388px" width="9" height="13" viewBox="0 0 9 13"><path d="M1.5,5 L4.5,1.5 L7.5,5 Z M1.5,8 L4.5,11.5 L7.5,8 Z" fill="#ddd"/></svg>
<svg class="ic" style="left:1455px;top:387px" width="14" height="14" viewBox="0 0 14 14">
 <g fill="#aaa"><circle cx="7" cy="7" r="4.6"/>
 <rect x="5.8" y="0.5" width="2.4" height="13"/><rect x="0.5" y="5.8" width="13" height="2.4"/>
 <rect x="5.8" y="0.5" width="2.4" height="13" transform="rotate(45 7 7)"/><rect x="5.8" y="0.5" width="2.4" height="13" transform="rotate(-45 7 7)"/></g>
 <circle cx="7" cy="7" r="1.8" fill="#404040"/>
</svg>
<svg class="ic" style="left:1476px;top:387px" width="12" height="14" viewBox="0 0 12 14"><path d="M3,6 V4 A3,3 0 0 1 9,4 V6" fill="none" stroke="#999" stroke-width="1.4"/><rect x="1.5" y="6" width="9" height="7" rx="1" fill="#999"/></svg>
<!-- layer list -->
<div class="abs" style="left:1232px;top:408px;width:264px;height:260px;background:#383838"></div>
<div class="abs" style="left:1481px;top:408px;width:15px;height:260px;background:#363636"></div>
<div class="abs" style="left:1485px;top:589px;width:7px;height:78px;border-radius:4px;background:#555"></div>
<div class="row" style="top:407px"></div>
<div class="row" style="top:440px"></div>
<div class="row" style="top:473px"></div>
<div class="row" style="top:506px;background:#3e6392"></div>
<div class="row" style="top:539px"></div>
<div class="row" style="top:572px"></div>
<div class="row" style="top:605px"></div>
<div class="row" style="top:638px;border-bottom:none"></div>
<div class="thumb" style="left:1273px;top:409px"></div>
<div class="thumb" style="left:1273px;top:442px"></div>
<div class="thumb" style="left:1273px;top:475px"></div>
<div class="thumb" style="left:1273px;top:508px"></div>
<div class="thumb" style="left:1263px;top:540px"></div>
<div class="thumb" style="left:1263px;top:573px"></div>
<div class="thumb" style="left:1253px;top:606px"></div>
<div class="thumb" style="left:1253px;top:639px;height:29px;border-bottom:none;background:linear-gradient(#2a2a2a 0,#2a2a2a 3.5px,#1e1f27 3.5px,#1e1f27 25px,#2a2a2a 25px)"></div>
<svg class="ic" style="left:0;top:0" width="1552" height="910" viewBox="0 0 1552 910">
 <path d="M1275.8,426.5 C1278,425 1279,420 1282,419.2 L1302,419.2 L1302,426.5 Z" fill="#5f78a5"/>
 <rect x="1274" y="454.6" width="26" height="2.6" fill="#5f78a5"/>
 <path d="M1274,495.4 C1275,486 1283,485 1290,484 L1302,482.3 L1302,495.4 Z" fill="#5f78a5"/>
 <path d="M1274,517.7 L1279,517.7 C1284,518 1288,523 1294,523.5 L1302,525.4 L1274,525.4 Z" fill="#5f78a5"/>
 <rect x="1264" y="551" width="28" height="7" fill="#c9ddfd"/>
 <rect x="1264" y="582" width="28" height="11" fill="#ffffff"/>
 <text x="1268" y="629" text-anchor="middle" font-family="Liberation Serif" font-size="20" fill="#e0e0e0">A</text>
</svg>
<div class="lt" style="left:1309px;top:417px">(Curve)</div>
<div class="lt" style="left:1309px;top:450px">(Curve)</div>
<div class="lt" style="left:1309px;top:483px">(Curve)</div>
<div class="lt" style="left:1309px;top:516px">(Curve)</div>
<div class="lt" style="left:1298px;top:549px">(Rectangle)</div>
<div class="lt" style="left:1298px;top:582px"><b>Space</b> (Rectangle)</div>
<div class="lt" style="left:1288px;top:615px">(Sea Coast Town - Cosmicit)</div>
<div class="lt" style="left:1288px;top:648px"><b>Background</b> (Curve)</div>
<div class="cb" style="top:415px"></div><div class="cb" style="top:448px"></div><div class="cb" style="top:481px"></div><div class="cb" style="top:514px"></div>
<div class="cb" style="top:547px"></div><div class="cb" style="top:580px"></div><div class="cb" style="top:613px"></div><div class="cb" style="top:646px"></div>
<svg class="ic" style="left:0;top:0" width="1552" height="910" viewBox="0 0 1552 910">
 <g fill="none" stroke="#e8e8e8" stroke-width="1.4">
 <path d="M1453,422 L1455.5,425.5 L1460,417"/><path d="M1453,455 L1455.5,458.5 L1460,450"/><path d="M1453,488 L1455.5,491.5 L1460,483"/><path d="M1453,521 L1455.5,524.5 L1460,516"/>
 <path d="M1453,554 L1455.5,557.5 L1460,549"/><path d="M1453,587 L1455.5,590.5 L1460,582"/><path d="M1453,653 L1455.5,656.5 L1460,648"/>
 </g>
</svg>
<!-- layers footer -->
<div class="abs" style="left:1232px;top:668px;width:264px;height:23px;background:#404040"></div>
<div class="abs" style="left:1237px;top:670px;width:21px;height:20px;background:#383838"></div>
<svg class="ic" style="left:1238px;top:672px" width="20" height="16" viewBox="0 0 20 16"><path d="M1.5,3.5 L9,1.5 L16.5,3.5 L9,6.5 Z" fill="none" stroke="#ccc" stroke-width="1.2"/><path d="M1.5,6.5 L9,10 L16.5,6.5 M1.5,10 L9,13.5 L16.5,10" fill="none" stroke="#ccc" stroke-width="1.5"/></svg>
<svg class="ic" style="left:1314px;top:673px" width="16" height="13" viewBox="0 0 16 13"><rect x="1" y="1" width="13" height="11" fill="#aaa"/><circle cx="7.5" cy="6.5" r="3.6" fill="#404040"/></svg>
<svg class="ic" style="left:1338px;top:672px" width="14" height="14" viewBox="0 0 14 14"><circle cx="7" cy="7" r="5.8" fill="none" stroke="#aaa" stroke-width="1.2"/><path d="M7,1.2 A5.8,5.8 0 0 0 7,12.8 Z" fill="#aaa"/><path d="M4.5,11 L9.5,3" stroke="#404040" stroke-width="0"/></svg>
<div class="abs" style="left:1359px;top:672px;font-family:'Liberation Serif';font-style:italic;font-size:16px;color:#aaa;line-height:1">fx</div>
<svg class="ic" style="left:1430px;top:672px" width="12" height="14" viewBox="0 0 12 14"><path d="M1.5,1 H7 L10.5,4.5 V13 H1.5 Z M7,1 V4.5 H10.5" fill="none" stroke="#bbb" stroke-width="1"/></svg>
<svg class="ic" style="left:1453px;top:673px" width="13" height="13" viewBox="0 0 13 13"><rect x="0.5" y="0.5" width="12" height="12" fill="#ddd"/><g fill="#444"><rect x="0.5" y="0.5" width="2.4" height="2.4"/><rect x="5.3" y="0.5" width="2.4" height="2.4"/><rect x="10.1" y="0.5" width="2.4" height="2.4"/><rect x="2.9" y="2.9" width="2.4" height="2.4"/><rect x="7.7" y="2.9" width="2.4" height="2.4"/><rect x="0.5" y="5.3" width="2.4" height="2.4"/><rect x="5.3" y="5.3" width="2.4" height="2.4"/><rect x="10.1" y="5.3" width="2.4" height="2.4"/><rect x="2.9" y="7.7" width="2.4" height="2.4"/><rect x="7.7" y="7.7" width="2.4" height="2.4"/><rect x="0.5" y="10.1" width="2.4" height="2.4"/><rect x="5.3" y="10.1" width="2.4" height="2.4"/><rect x="10.1" y="10.1" width="2.4" height="2.4"/></g></svg>
<svg class="ic" style="left:1476px;top:672px" width="13" height="15" viewBox="0 0 13 15"><path d="M1,3 H12 M4.5,3 V1.3 H8.5 V3" fill="none" stroke="#bbb" stroke-width="1.2"/><path d="M2.5,4.5 H10.5 L10,14 H3 Z" fill="#bbb"/><path d="M5,6 V12.5 M6.5,6 V12.5 M8,6 V12.5" stroke="#404040" stroke-width="0.8"/></svg>
<div class="abs" style="left:1232px;top:691px;width:264px;height:2px;background:#2a2a2a"></div>
<!-- transform panel -->
<div class="tabstrip" style="top:693px;height:22px"></div>
<div class="abs" style="left:1239px;top:700px;width:1px;height:8px;background:#5a5a5a"></div>
<div class="abs" style="left:1242px;top:700px;width:1px;height:8px;background:#5a5a5a"></div>
<div class="tabsel" style="left:1251px;top:695px;width:55px;height:20px"></div>
<div class="tab" style="left:1254px;top:699px;color:#f0f0f0">Transform</div>
<div class="tab" style="left:1311px;top:699px">History</div>
<div class="tsep" style="left:1350px;top:699px"></div>
<div class="tab" style="left:1354px;top:699px">Navigator</div>
<div class="abs" style="left:1232px;top:715px;width:264px;height:100px;background:#404040"></div>
<div class="abs" style="left:1252px;top:738px;width:33px;height:33px;background:#5e5e5e"></div>
<svg class="ic" style="left:0;top:0" width="1552" height="910" viewBox="0 0 1552 910">
 <g fill="#999"><rect x="1266.5" y="736" width="4.2" height="4.2"/><rect x="1282.8" y="736" width="4.2" height="4.2"/>
 <rect x="1250" y="752.4" width="4.2" height="4.2"/><rect x="1266.5" y="752.4" width="4.2" height="4.2"/><rect x="1282.8" y="752.4" width="4.2" height="4.2"/>
 <rect x="1250" y="768.6" width="4.2" height="4.2"/><rect x="1266.5" y="768.6" width="4.2" height="4.2"/><rect x="1282.8" y="768.6" width="4.2" height="4.2"/></g>
 <rect x="1247.1" y="733.4" width="10" height="9.6" fill="#fff"/>
 <path d="M1476,742 A2,2.6 0 1 1 1476,746.5 M1476,746 A2,2.6 0 1 1 1476,750.5" fill="none" stroke="#aaa" stroke-width="0"/>
 <ellipse cx="1476" cy="743" rx="1.8" ry="3" fill="none" stroke="#999" stroke-width="1"/>
 <ellipse cx="1476" cy="749.5" rx="1.8" ry="3" fill="none" stroke="#999" stroke-width="1"/>
</svg>
<div class="lbl" style="left:1306px;top:730px">X:</div>
<div class="fld" style="left:1319px;top:725px;width:60px;height:19px"></div>
<div class="ft" style="left:1322px;top:730px">1.035 in</div>
<div class="lbl" style="left:1306px;top:752px">Y:</div>
<div class="fld" style="left:1319px;top:747px;width:60px;height:19px"></div>
<div class="ft" style="left:1322px;top:752px">2.821 in</div>
<div class="lbl" style="left:1388px;top:730px">W:</div>
<div class="fld" style="left:1403px;top:725px;width:60px;height:19px"></div>
<div class="ft" style="left:1406px;top:730px">5.491 in</div>
<div class="lbl" style="left:1389px;top:752px">H:</div>
<div class="fld" style="left:1403px;top:747px;width:60px;height:19px"></div>
<div class="ft" style="left:1406px;top:752px">1.563 in</div>
<div class="lbl" style="left:1306px;top:784px">R:</div>
<div class="fld" style="left:1319px;top:779px;width:60px;height:19px"></div>
<div class="ft" style="left:1322px;top:784px">0 °</div>
<svg class="ic" style="left:1368px;top:785px" width="9" height="7" viewBox="0 0 9 7"><path d="M1,1 H8 L4.5,6 Z" fill="#ddd"/></svg>
<div class="lbl" style="left:1390px;top:784px">S:</div>
<div class="fld" style="left:1403px;top:779px;width:60px;height:19px"></div>
<div class="ft" style="left:1406px;top:784px">0 °</div>
<svg class="ic" style="left:1452px;top:785px" width="9" height="7" viewBox="0 0 9 7"><path d="M1,1 H8 L4.5,6 Z" fill="#ddd"/></svg>

<!-- STATUS -->
<div class="t" style="left:77px;top:820px;font-size:11px;color:#c8c8c8">'Curve' selected. <b style="color:#fff">Drag</b> to move selection. <b style="color:#fff">Click</b> another object to select it. <b style="color:#fff">Click</b> on an empty area to deselect selection.</div>

</body></html>
